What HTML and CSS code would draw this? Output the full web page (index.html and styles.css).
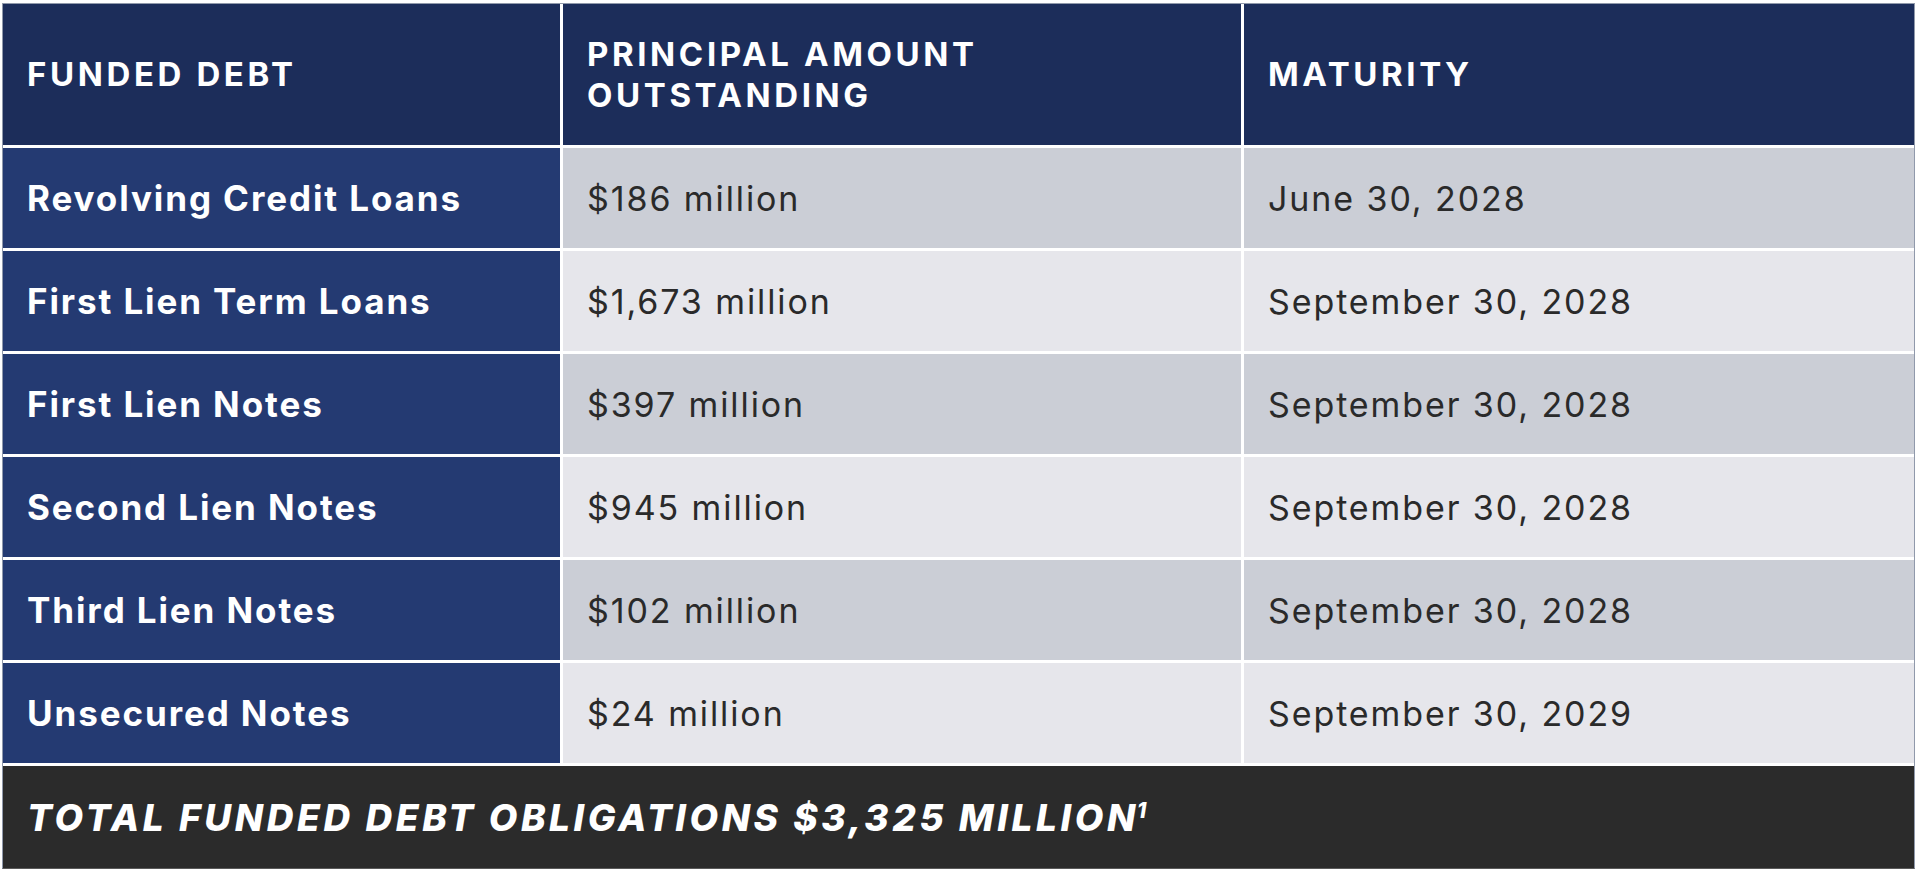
FILE: index.html
```html
<!DOCTYPE html>
<html lang="en">
<head>
<meta charset="utf-8">
<title>Funded Debt</title>
<link rel="stylesheet" href="styles.css">
</head>
<body>
<div class="debt-table">
  <div class="cell head">FUNDED DEBT</div>
  <div class="cell head">PRINCIPAL AMOUNT<br>OUTSTANDING</div>
  <div class="cell head">MATURITY</div>

  <div class="cell label">Revolving Credit Loans</div>
  <div class="cell val odd">$186 million</div>
  <div class="cell val odd">June 30, 2028</div>

  <div class="cell label">First Lien Term Loans</div>
  <div class="cell val even">$1,673 million</div>
  <div class="cell val even">September 30, 2028</div>

  <div class="cell label">First Lien Notes</div>
  <div class="cell val odd">$397 million</div>
  <div class="cell val odd">September 30, 2028</div>

  <div class="cell label">Second Lien Notes</div>
  <div class="cell val even">$945 million</div>
  <div class="cell val even">September 30, 2028</div>

  <div class="cell label">Third Lien Notes</div>
  <div class="cell val odd">$102 million</div>
  <div class="cell val odd">September 30, 2028</div>

  <div class="cell label">Unsecured Notes</div>
  <div class="cell val even">$24 million</div>
  <div class="cell val even">September 30, 2029</div>

  <div class="cell total">TOTAL FUNDED DEBT OBLIGATIONS $3,325 MILLION<sup class="note">1</sup></div>
</div>
</body>
</html>
```
FILE: styles.css
```css
html, body {
  margin: 0;
  padding: 0;
  background: #ffffff;
}

body {
  font-family: Inter, "Liberation Sans", sans-serif;
}

.debt-table {
  margin: 3px 0 0 2px;
  width: 1911px;
  border: 1px solid #9099ab;
  border-bottom-color: #5a5a5a;
  background: #ffffff;
  display: grid;
  grid-template-columns: 557px 678px 1fr;
  grid-template-rows: 141px repeat(6, 100px) 102px;
  gap: 3px;
}

.cell {
  display: flex;
  align-items: center;
  padding: 0 24px;
  box-sizing: border-box;
}

.head {
  background: #1c2d5a;
  color: #ffffff;
  font-weight: 700;
  font-size: 33px;
  line-height: 41px;
  letter-spacing: 3.6px;
}

.label {
  background: #243a72;
  color: #ffffff;
  font-weight: 700;
  font-size: 35px;
  letter-spacing: 1.9px;
}

.val {
  color: #2a2a2a;
  font-weight: 400;
  font-size: 34px;
  letter-spacing: 1.9px;
}

.odd {
  background: #cbced6;
}

.even {
  background: #e6e6eb;
}

.total {
  grid-column: 1 / -1;
  background: #2b2b2b;
  color: #ffffff;
  font-weight: 800;
  font-style: italic;
  font-size: 37px;
  letter-spacing: 3.6px;
}

.note {
  font-size: 21px;
  letter-spacing: 0;
  align-self: flex-start;
  margin-top: 32px;
  margin-left: -2px;
}
```
